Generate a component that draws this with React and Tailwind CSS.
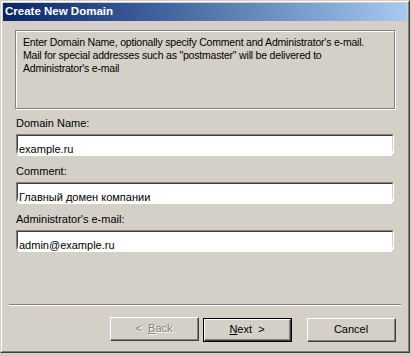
import React from "react";

const font = { fontFamily: '"Liberation Sans", Arial, sans-serif' };

function Field({ label, value }) {
  return (
    <div className="flex flex-col">
      <label className="text-[11px] leading-[13px] text-black">{label}</label>
      <div className="mt-[4px] h-[20px] border-t-2 border-l-2 border-t-[#808080] border-l-[#808080] border-b-2 border-r-2 border-b-white border-r-white bg-white">
        <div className="h-full border-t border-l border-t-[#404040] border-l-[#404040] border-b border-r border-b-[#d4d0c8] border-r-[#d4d0c8] -m-px">
          <input
            readOnly
            value={value}
            className="w-full h-full px-[1px] pt-0 text-[11px] leading-[15px] text-black bg-white outline-none"
            style={font}
          />
        </div>
      </div>
    </div>
  );
}

function WinButton({ children, isDefault, disabled }) {
  const inner = (
    <div className="h-full w-full border-t border-l border-t-white border-l-white border-b border-r border-b-[#404040] border-r-[#404040]">
      <div className="h-full w-full border-b border-r border-b-[#808080] border-r-[#808080] flex items-center justify-center text-[11px] whitespace-pre">
        {children}
      </div>
    </div>
  );
  return (
    <button
      className={
        "h-[24px] w-[89px] bg-[#d4d0c8] " +
        (isDefault ? "border border-black" : "") +
        (disabled ? " text-[#808080] [text-shadow:1px_1px_0_#fff]" : " text-black")
      }
      style={font}
    >
      {inner}
    </button>
  );
}

export default function App() {
  return (
    <div className="w-[412px] h-[356px] bg-[#d4d0c8]" style={font}>
      <div className="w-[410px] h-[353px] border border-t-[#d4d0c8] border-l-[#d4d0c8] border-r-[#404040] border-b-[#404040]">
        <div className="h-full border border-t-white border-l-white border-r-[#808080] border-b-[#808080] p-px flex flex-col">
          <div className="h-[18px] bg-gradient-to-r from-[#0a246a] to-[#a6caf0] flex items-center pl-[2px]">
            <span className="text-[11.5px] font-bold text-white leading-none">Create New Domain</span>
          </div>

          <div className="pl-[12px] pr-[12px] flex flex-col">
            {/* info box */}
            <div className="mt-[9px] h-[79px] border border-[#808080] shadow-[inset_1px_1px_0_#fff,1px_1px_0_#fff] pl-[7px] pt-[5px] pr-[4px]">
              <p className="text-[10.5px] tracking-[-0.2px] leading-[13px] text-black whitespace-nowrap">
                Enter Domain Name, optionally specify Comment and Administrator's e-mail.
                <br />
                Mail for special addresses such as "postmaster" will be delivered to
                <br />
                Administrator's e-mail
              </p>
            </div>

            <div className="mt-[8px] flex flex-col gap-[11px] pl-px pr-[1px]">
              <Field label="Domain Name:" value="example.ru" />
              <Field label="Comment:" value="Главный домен компании" />
              <Field label="Administrator's e-mail:" value="admin@example.ru" />
            </div>
          </div>

          <div className="mt-auto mx-[6px] h-[2px] border-t border-t-[#808080] border-b border-b-white" />

          <div className="flex justify-end items-center pr-[11px] pt-[10px] pb-[8px]">
            <WinButton disabled>
              {"<  "}<span className="underline">B</span>ack
            </WinButton>
            <div className="ml-[4px]">
              <WinButton isDefault>
                <span className="underline">N</span>{"ext  >"}
              </WinButton>
            </div>
            <div className="ml-[15px]">
              <WinButton>Cancel</WinButton>
            </div>
          </div>
        </div>
      </div>
    </div>
  );
}
